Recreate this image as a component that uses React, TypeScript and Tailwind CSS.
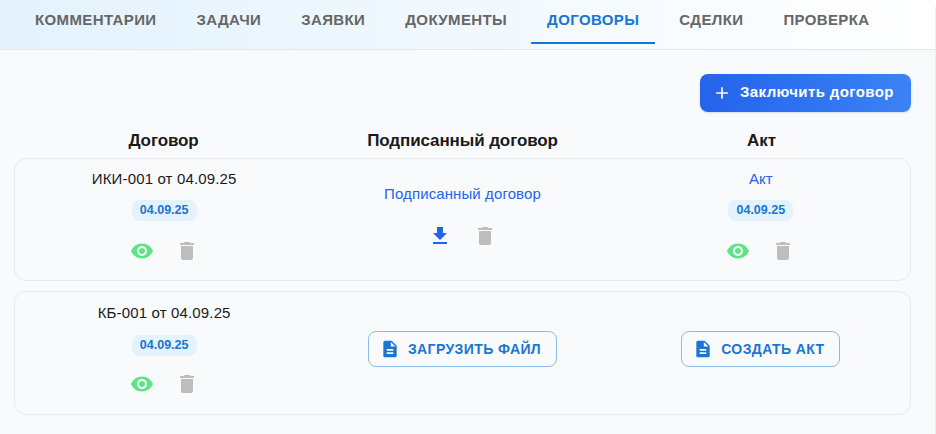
const sans = "font-['Liberation_Sans',Arial,sans-serif]";

function MuiIcon({ d, className }: { d: string; className: string }) {
  return (
    <svg viewBox="0 0 24 24" fill="currentColor" className={className}>
      <path d={d} />
    </svg>
  );
}

const eyePath =
  "M12 4.5C7 4.5 2.73 7.61 1 12c1.73 4.39 6 7.5 11 7.5s9.27-3.11 11-7.5c-1.73-4.39-6-7.5-11-7.5zM12 17c-2.76 0-5-2.24-5-5s2.24-5 5-5 5 2.24 5 5-2.24 5-5 5zm0-8c-1.66 0-3 1.34-3 3s1.34 3 3 3 3-1.34 3-3-1.34-3-3-3z";
const trashPath = "M6 19c0 1.1.9 2 2 2h8c1.1 0 2-.9 2-2V7H6v12zM19 4h-3.5l-1-1h-5l-1 1H5v2h14V4z";
const downloadPath = "M19 9h-4V3H9v6H5l7 7 7-7zM5 18v2h14v-2H5z";
const docPath =
  "M14 2H6c-1.1 0-1.99.9-1.99 2L4 20c0 1.1.89 2 1.99 2H18c1.1 0 2-.9 2-2V8l-6-6zm2 16H8v-2h8v2zm0-4H8v-2h8v2zm-3-5V3.5L18.5 9H13z";
const plusPath = "M19 13h-6v6h-2v-6H5v-2h6V5h2v6h6v2z";

const tabs = ["КОММЕНТАРИИ", "ЗАДАЧИ", "ЗАЯВКИ", "ДОКУМЕНТЫ", "ДОГОВОРЫ", "СДЕЛКИ", "ПРОВЕРКА"];

function DateBadge() {
  return (
    <span className="block rounded-lg bg-[#e3f2fd] px-2 py-[2px] text-[12.5px] leading-[17px] font-semibold text-[#1976d2]">
      04.09.25
    </span>
  );
}

function IconPair({ first }: { first: "eye" | "download" }) {
  return (
    <div className="flex items-center justify-center gap-[21px]">
      {first === "eye" ? (
        <MuiIcon d={eyePath} className="h-6 w-6 text-[#5be584]" />
      ) : (
        <MuiIcon d={downloadPath} className="h-6 w-6 text-[#2563eb]" />
      )}
      <MuiIcon d={trashPath} className="h-6 w-6 text-[#bdbdbd]" />
    </div>
  );
}

function OutlineButton({ label }: { label: string }) {
  return (
    <button className="flex h-[36px] items-center gap-2 rounded-lg border border-[#8db9e8] pr-[15px] pl-[11px] text-[14px] font-bold tracking-[0.4px] text-[#1976d2]">
      <MuiIcon d={docPath} className="h-5 w-5" />
      {label}
    </button>
  );
}

export default function App() {
  return (
    <div className={`h-[434px] w-[936px] overflow-hidden bg-white ${sans}`}>
      <div className="h-full w-full rounded-tr-xl border-r border-[#eceef2] bg-[#f9fafc]">
        <div className="flex h-[50px] gap-2 rounded-tr-xl border-b border-[#e5e7eb] bg-gradient-to-r from-[#e3f2fd] to-white pl-[19px]">
          {tabs.map((tab) => (
            <div
              key={tab}
              className={
                tab === "ДОГОВОРЫ"
                  ? "flex h-[44px] items-center border-b-2 border-[#1976d2] px-4 pb-[2px] text-[15px] font-bold tracking-[0.38px] text-[#1976d2]"
                  : "flex h-[44px] items-center px-4 pb-[4px] text-[15px] font-bold tracking-[0.38px] text-[#666666]"
              }
            >
              {tab}
            </div>
          ))}
        </div>

        <div className="flex justify-end pt-[24px] pr-[24px]">
          <button className="flex h-[38px] w-[211px] items-center gap-2 rounded-lg bg-gradient-to-r from-[#2563eb] to-[#3b82f6] pb-[1px] pl-3 text-[15px] font-bold tracking-[0.4px] text-white shadow-sm">
            <MuiIcon d={plusPath} className="h-5 w-5" />
            Заключить договор
          </button>
        </div>

        <div className="mx-[14px] w-[897px]">
          <div className="mt-[19px] grid h-[20px] grid-cols-3 text-center text-[17px] leading-[20px] font-bold tracking-[-0.1px] text-[#1a1a1a]">
            <div>Договор</div>
            <div>Подписанный договор</div>
            <div>Акт</div>
          </div>

          <div className="mt-[7px] grid h-[123px] grid-cols-3 rounded-xl border border-[#e5e9f2] pt-[10px]">
            <div className="flex flex-col items-center">
              <div className="text-[15px] leading-[20px] tracking-[0.15px] text-[#1a1a1a]">ИКИ-001 от 04.09.25</div>
              <div className="mt-[11px]">
                <DateBadge />
              </div>
              <div className="mt-[18px]">
                <IconPair first="eye" />
              </div>
            </div>
            <div className="flex flex-col items-center pt-[15px]">
              <div className="text-[15px] leading-[20px] tracking-[0.1px] text-[#2563eb]">Подписанный договор</div>
              <div className="mt-[20px]">
                <IconPair first="download" />
              </div>
            </div>
            <div className="flex flex-col items-center">
              <div className="text-[15px] leading-[20px] tracking-[0.1px] text-[#2563eb]">Акт</div>
              <div className="mt-[11px]">
                <DateBadge />
              </div>
              <div className="mt-[18px]">
                <IconPair first="eye" />
              </div>
            </div>
          </div>

          <div className="mt-[10px] grid h-[124px] grid-cols-3 rounded-xl border border-[#e5e9f2] pt-[11px]">
            <div className="flex flex-col items-center">
              <div className="text-[15px] leading-[20px] tracking-[0.15px] text-[#1a1a1a]">КБ-001 от 04.09.25</div>
              <div className="mt-[12px]">
                <DateBadge />
              </div>
              <div className="mt-[16px]">
                <IconPair first="eye" />
              </div>
            </div>
            <div className="flex justify-center pt-[28px]">
              <OutlineButton label="ЗАГРУЗИТЬ ФАЙЛ" />
            </div>
            <div className="flex justify-center pt-[28px]">
              <OutlineButton label="СОЗДАТЬ АКТ" />
            </div>
          </div>
        </div>
      </div>
    </div>
  );
}
